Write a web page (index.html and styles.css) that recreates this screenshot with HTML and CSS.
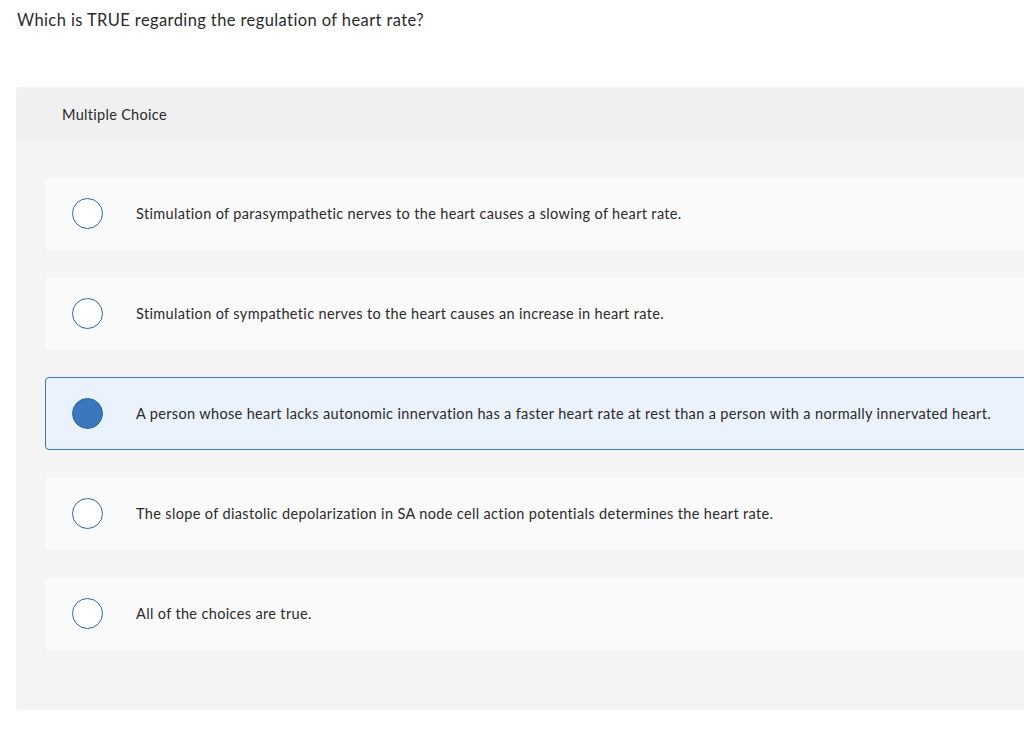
FILE: index.html
```html
<!DOCTYPE html>
<html>
<head>
<meta charset="utf-8">
<link rel="stylesheet" href="styles.css">
</head>
<body>
<div class="page">
  <h1 class="question">Which is TRUE regarding the regulation of heart rate?</h1>
  <div class="panel">
    <div class="panel-head">Multiple Choice</div>
    <div class="panel-body">
      <div class="option"><span class="radio"></span><span class="label">Stimulation of parasympathetic nerves to the heart causes a slowing of heart rate.</span></div>
      <div class="option"><span class="radio"></span><span class="label">Stimulation of sympathetic nerves to the heart causes an increase in heart rate.</span></div>
      <div class="option selected"><span class="radio"></span><span class="label">A person whose heart lacks autonomic innervation has a faster heart rate at rest than a person with a normally innervated heart.</span></div>
      <div class="option"><span class="radio"></span><span class="label">The slope of diastolic depolarization in SA node cell action potentials determines the heart rate.</span></div>
      <div class="option"><span class="radio"></span><span class="label">All of the choices are true.</span></div>
    </div>
  </div>
</div>
</body>
</html>
```
FILE: styles.css
```css
html, body {
  margin: 0;
  padding: 0;
  background: #ffffff;
  overflow: hidden;
}
body {
  font-family: Lato, "Open Sans", sans-serif;
  color: #2a2a2a;
  width: 1024px;
  height: 729px;
}
.page {
  padding: 9px 0 0 16px;
}
.question {
  margin: 0 0 0 1px;
  font-size: 16.5px;
  letter-spacing: 0.4px;
  font-weight: 400;
  line-height: 22px;
  color: #2a2a2a;
}
.panel {
  margin-top: 56px;
  width: 1040px;
  border-radius: 4px;
  overflow: hidden;
  background: #f4f4f4;
}
.panel-head {
  background: #f0f0f0;
  height: 55px;
  padding-left: 46px;
  display: flex;
  align-items: center;
  font-size: 14.5px;
  letter-spacing: 0.3px;
  color: #2a2a2a;
}
.panel-body {
  padding: 35px 0 60px 29px;
  display: flex;
  flex-direction: column;
  gap: 27px;
}
.option {
  height: 73px;
  background: #fafafa;
  border-radius: 4px;
  display: flex;
  align-items: center;
  box-sizing: border-box;
  padding-left: 26px;
  border: 1px solid transparent;
}
.option.selected {
  background: #eaf2fc;
  border-color: #3c78bd;
}
.radio {
  width: 29px;
  height: 29px;
  border-radius: 50%;
  border: 1.5px solid #2f67a6;
  background: #ffffff;
  flex: none;
}
.option.selected .radio {
  background: #3a77bd;
  border-color: #2d64a3;
}
.label {
  margin-left: 33px;
  font-size: 14.5px;
  letter-spacing: 0.35px;
  color: #2a2a2a;
}
```
